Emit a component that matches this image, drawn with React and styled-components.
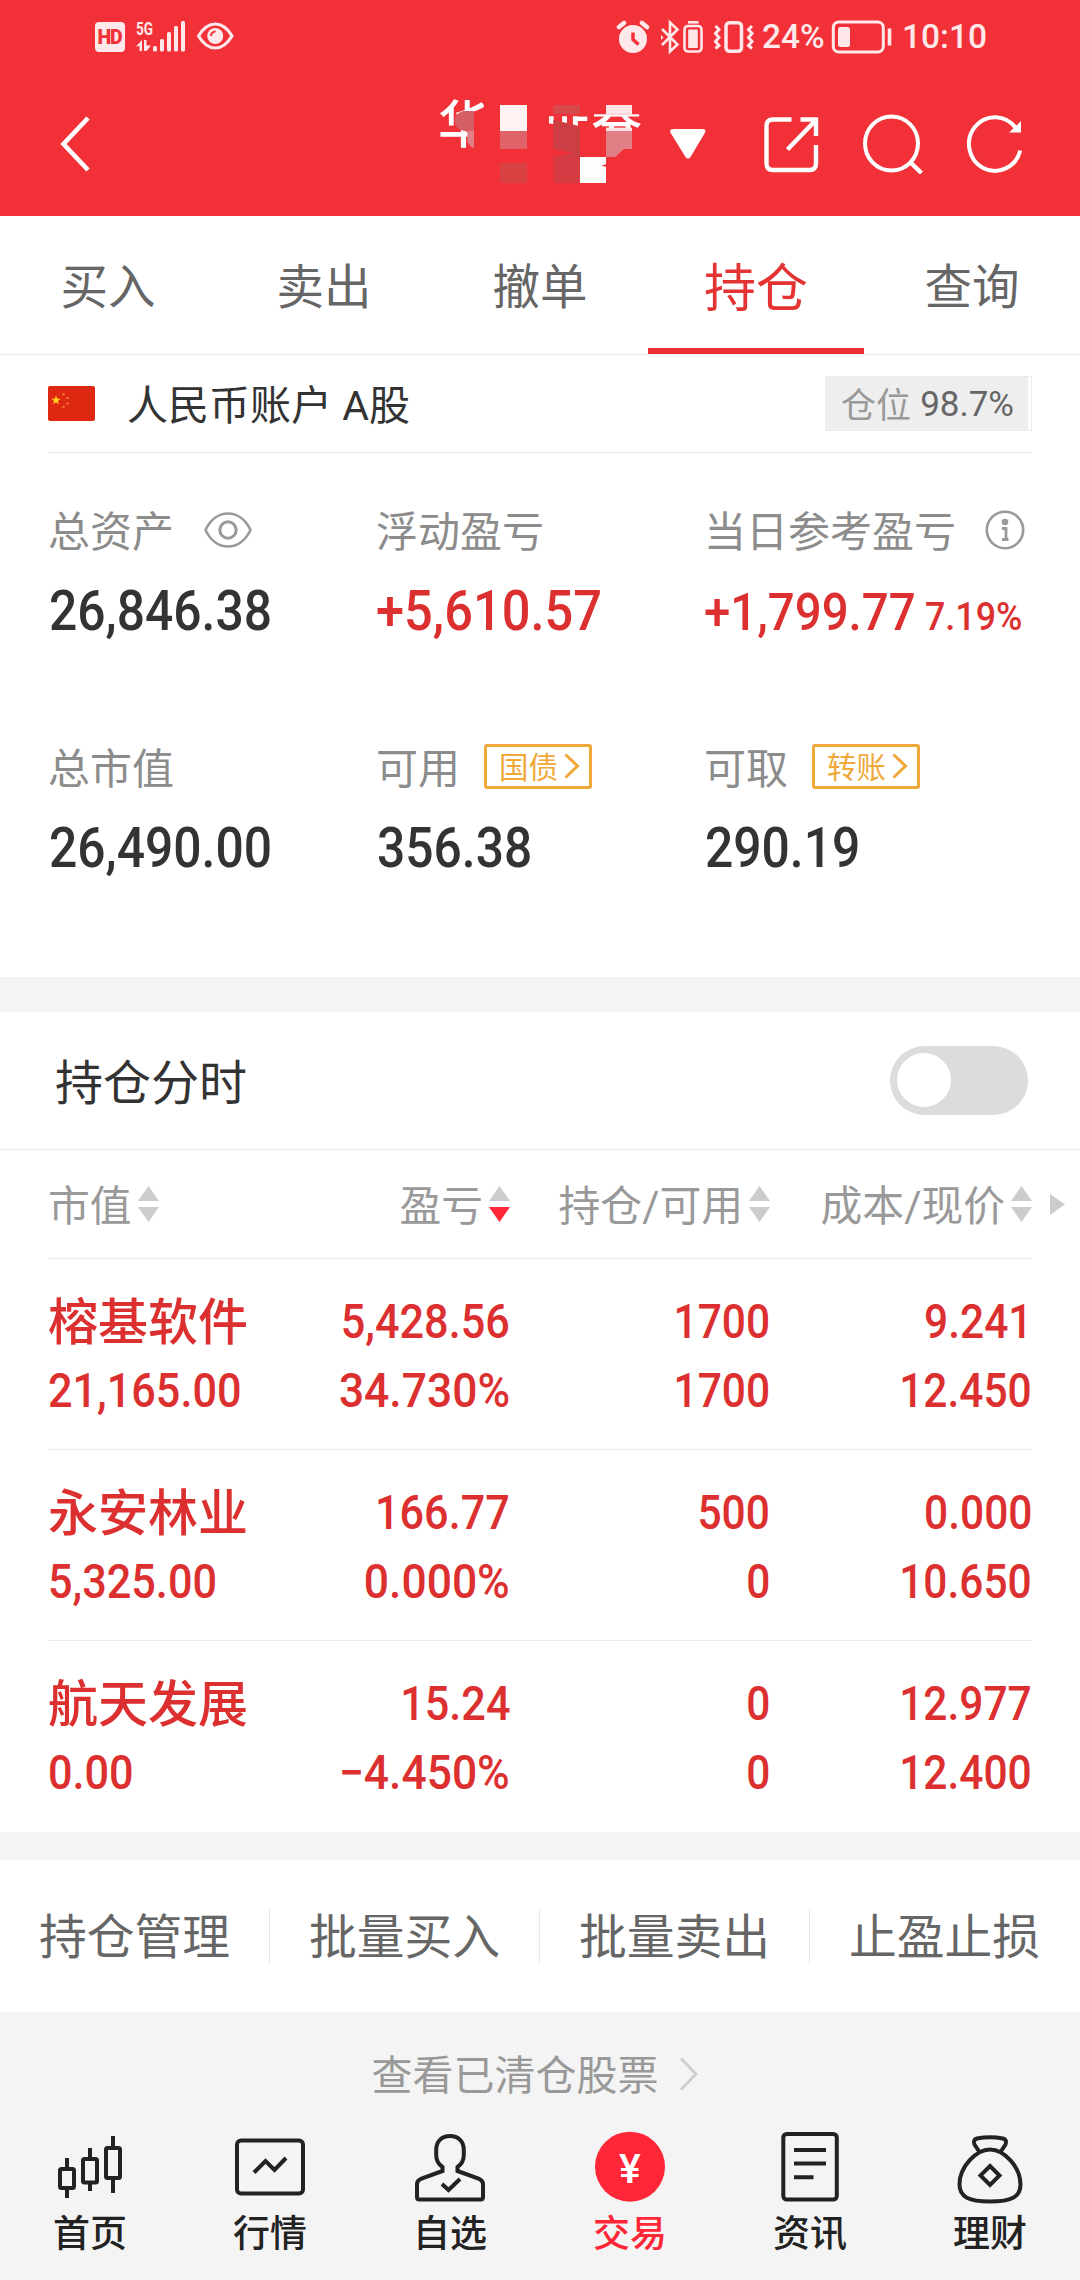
import React from 'react';
import styled, { createGlobalStyle } from 'styled-components';

const variables = {
  colorHeader: '#f23037',
  colorStatus: '#ffe8e9',
  colorRed: '#dc3030',
  colorActive: '#ff2637',
  colorGold: '#f0a838',
  colorText: '#333333',
  colorNeutral: '#666666',
  colorLabel: '#8c8c8c',
  colorLight: '#999999',
  colorLine: '#ececec',
  colorBand: '#f4f4f4',
};

const GlobalStyle = createGlobalStyle`
  * {
    box-sizing: border-box;
  }
  body {
    margin: 0;
    background: ${variables.colorBand};
    font-family: Roboto, 'Noto Sans CJK SC', sans-serif;
  }
  svg {
    display: block;
    flex: none;
  }
`;

const Page = styled.div`
  display: flex;
  flex-direction: column;
  width: 1080px;
  height: 2280px;
  overflow: hidden;
  background: #fff;
`;

const Header = styled.header`
  height: 216px;
  background: ${variables.colorHeader};
`;

const StatusBar = styled.div`
  display: flex;
  align-items: center;
  justify-content: space-between;
  height: 72px;
  padding: 2px 96px 0 95px;
  color: ${variables.colorStatus};
`;

const StatusGroup = styled.div`
  display: flex;
  align-items: center;
`;

const StatusText = styled.span`
  width: ${p => p.$width}px;
  margin-left: ${p => p.$gap}px;
  font-size: 33.5px;
  font-weight: 500;
  line-height: 40px;
  white-space: nowrap;
`;

const TitleBar = styled.div`
  display: flex;
  align-items: center;
  height: 144px;
  padding: 0 56px 0 60px;
`;

const Title = styled.div`
  position: relative;
  display: flex;
  width: 204px;
  height: 90px;
  margin: 0 28px 0 348px;
  color: #fff;
`;

const TitleChar = styled.span`
  width: 51px;
  height: 51px;
  font-size: 51px;
  font-weight: 500;
  line-height: ${p => p.$line}px;
  clip-path: ${p => p.$clip};
`;

const Mosaic = styled.svg`
  position: absolute;
  top: 0;
  left: 0;
`;

const HeaderIcons = styled.div`
  display: flex;
  align-items: center;
  gap: 44px;
  margin-left: auto;
`;

const Tabs = styled.nav`
  display: grid;
  grid-template-columns: repeat(5, 1fr);
  height: 139px;
  border-bottom: 1px solid ${variables.colorLine};
`;

const Tab = styled.div`
  display: flex;
  align-items: center;
  justify-content: center;
  padding: ${p => (p.$active ? '5px 0 0' : '0 0 3px')};
  border-bottom: ${p => (p.$active ? '6px solid #ed3033' : '0')};
  color: ${p => (p.$active ? '#e33333' : variables.colorNeutral)};
  font-size: ${p => (p.$active ? 52 : 47.5)}px;
`;

const Account = styled.div`
  display: flex;
  align-items: center;
  height: 98px;
  margin: 0 48px;
  border-bottom: 1px solid ${variables.colorLine};
`;

const AccountName = styled.div`
  margin-left: 32px;
  padding-bottom: 3px;
  color: ${variables.colorText};
  font-size: 41px;
`;

const Ratio = styled.div`
  height: 55px;
  margin-left: auto;
  padding-right: 3px;
  border: 1px solid ${variables.colorLine};
`;

const RatioInner = styled.div`
  display: flex;
  align-items: center;
  gap: 9px;
  height: 53px;
  padding: 1px 14px 0 15px;
  background: #eee;
  color: ${variables.colorNeutral};
  font-size: 35px;
`;

const RatioLabel = styled.span`
  padding-bottom: 3px;
  color: ${variables.colorLight};
`;

const Stats = styled.section`
  display: grid;
  grid-template-columns: repeat(3, 328px);
  grid-auto-rows: 148px;
  row-gap: 89px;
  height: 524px;
  padding: 46px 48px 0;
`;

const StatLabel = styled.div`
  display: flex;
  align-items: center;
  height: 60px;
  color: ${variables.colorLabel};
  font-size: 42px;
  white-space: nowrap;
`;

const StatText = styled.span`
  padding-bottom: 2px;
`;

const StatIcon = styled.span`
  margin-left: ${p => p.$gap}px;
  padding-top: 2px;
`;

const StatValue = styled.div`
  display: flex;
  align-items: baseline;
  margin-top: ${p => (p.$note ? 15 : 13)}px;
  padding-left: ${p => (p.$up ? 0 : 1)}px;
  color: ${p => (p.$up ? variables.colorRed : variables.colorText)};
  line-height: 78px;
  white-space: nowrap;
`;

/* figures are set in a slightly narrowed face */
const Figure = styled.span`
  display: inline-block;
  width: ${p => (p.$width ? `${p.$width}px` : 'auto')};
  font-size: ${p => p.$size}px;
  font-weight: 500;
  transform: scaleX(${p => p.$scale});
  transform-origin: ${p => (p.$right ? 'right' : 'left')} center;
`;

const Tag = styled.span`
  display: flex;
  align-items: center;
  gap: 6px;
  width: 108px;
  height: 45px;
  margin-left: 24px;
  padding-left: 12px;
  border: 3px solid ${variables.colorGold};
  border-radius: 3px;
  color: ${variables.colorGold};
  font-size: 29.5px;
`;

const TagText = styled.span`
  padding-bottom: 2px;
`;

const Band = styled.div`
  flex: none;
  height: ${p => p.$height}px;
  background: ${variables.colorBand};
`;

const Intraday = styled.div`
  display: flex;
  align-items: center;
  justify-content: space-between;
  height: 138px;
  padding: 0 52px 0 55px;
  border-bottom: 1px solid ${variables.colorLine};
`;

const IntradayTitle = styled.div`
  padding-bottom: 4px;
  color: ${variables.colorText};
  font-size: 48px;
`;

const Switch = styled.div`
  width: 138px;
  height: 69px;
  padding: 7px;
  border-radius: 35px;
  background: #dcdcdc;
`;

const Knob = styled.div`
  width: 54px;
  height: 54px;
  border-radius: 50%;
  background: #fff;
`;

const columns = '222px 240px 260px 262px';

const TableHead = styled.div`
  display: grid;
  grid-template-columns: ${columns} 48px;
  align-items: center;
  height: 108px;
  padding: 0 0 0 48px;
`;

const HeadCell = styled.div`
  display: flex;
  align-items: center;
  justify-content: ${p => (p.$left ? 'flex-start' : 'flex-end')};
  gap: 6px;
  color: ${variables.colorLight};
  font-size: 41.8px;
  white-space: nowrap;
`;

const HeadText = styled.span`
  padding-bottom: 3px;
`;

const More = styled.div`
  padding-left: 18px;
`;

const Holding = styled.div`
  display: grid;
  grid-template-columns: ${columns};
  grid-auto-rows: 69px;
  height: ${p => (p.$last ? 192 : 191)}px;
  margin: 0 48px;
  padding-top: 28px;
  border-top: 1px solid ${variables.colorLine};
  color: ${variables.colorRed};
  line-height: 69px;
`;

const StockName = styled.div`
  padding: 2px 0 0 0;
  font-size: 50px;
  font-weight: 500;
  white-space: nowrap;
`;

const HoldingCell = styled.div`
  text-align: ${p => (p.$left ? 'left' : 'right')};
  white-space: nowrap;
`;

const Actions = styled.div`
  display: grid;
  grid-template-columns: repeat(4, 1fr);
  align-items: center;
  height: 152px;
`;

const Action = styled.div`
  height: 55px;
  border-right: 1px solid ${p => (p.$last ? 'transparent' : '#e8e8e8')};
  color: ${variables.colorNeutral};
  font-size: 47.8px;
  line-height: 59px;
  text-align: center;
`;

const Footer = styled.footer`
  height: 268px;
  background: ${variables.colorBand};
`;

const Cleared = styled.div`
  display: flex;
  align-items: center;
  justify-content: center;
  gap: 20px;
  height: 117px;
  padding: 7px 11px 0 0;
`;

const ClearedText = styled.span`
  padding-bottom: 5px;
  color: ${variables.colorLight};
  font-size: 41px;
`;

const BottomNav = styled.nav`
  display: grid;
  grid-template-columns: repeat(6, 1fr);
`;

const NavItem = styled.div`
  display: flex;
  flex-direction: column;
  align-items: center;
  color: ${p => (p.$active ? variables.colorActive : '#222')};
  font-size: 37px;
  font-weight: 500;
  line-height: 60px;
`;

const SortIcon = ({ desc }) => (
  <svg width="21" height="36" viewBox="0 0 21 36">
    <path d="M10.5 0L21 15H0z" fill="#ccc" />
    <path d="M10.5 36L21 21H0z" fill={desc ? variables.colorActive : '#ccc'} />
  </svg>
);

const TagArrow = () => (
  <svg width="16" height="26" viewBox="0 0 16 26" fill="none" stroke="currentColor" strokeWidth="3">
    <path d="M1.5 1.5L13.5 13L1.5 24.5" />
  </svg>
);

const SignalIcons = () => (
  <svg width="140" height="36" viewBox="95 19 140 36" fill={variables.colorStatus}>
    <rect x="95" y="22" width="30" height="30" rx="4" />
    <text x="97.5" y="44" fontSize="19.5" fontWeight="900" fill={variables.colorHeader} textLength="25">HD</text>
    <text x="136" y="34.5" fontSize="18" fontWeight="700" textLength="17" lengthAdjust="spacingAndGlyphs">5G</text>
    <path d="M136 46.5L142 40v11h-2.500v-5zM144 40h2.500v5.500H151L146.500 51H144z" />
    <rect x="153" y="46" width="4" height="5.500" rx="1.500" />
    <rect x="160" y="39" width="4" height="12.500" rx="1.500" />
    <rect x="167" y="32" width="4" height="19.500" rx="1.500" />
    <rect x="174" y="26" width="4" height="25.500" rx="1.500" />
    <rect x="181" y="21" width="4" height="30.500" rx="1.500" />
    <path
      d="M198.500 36C208 20 222.500 20 232 36C222.500 52 208 52 198.500 36z"
      fill="none"
      stroke={variables.colorStatus}
      strokeWidth="3.200"
    />
    <circle cx="215.200" cy="36" r="8" />
    <path d="M211 36a4.500 4.500 0 0 1 4.500-4.500" fill="none" stroke={variables.colorHeader} strokeWidth="2" />
  </svg>
);

const DeviceIcons = () => (
  <svg width="138" height="36" viewBox="615 18 138 36" fill="none" stroke={variables.colorStatus}>
    <circle cx="632" cy="38" r="14" fill={variables.colorStatus} stroke="none" />
    <path d="M618 26l5-4M646 26l-5-4" strokeWidth="4.500" strokeLinecap="round" />
    <path d="M632 31.500v7l5.500 5" stroke={variables.colorHeader} strokeWidth="3.500" />
    <path d="M661 28L676.500 43.500L669 50.500V21.500L676.500 28.500L661 44" strokeWidth="2.600" />
    <path d="M660 34v5l2.500-2.500z" fill={variables.colorStatus} stroke="none" />
    <rect x="683.500" y="25" width="17" height="25.500" rx="3.500" strokeWidth="2.600" />
    <rect x="687.200" y="28.500" width="9.600" height="18.500" fill={variables.colorStatus} stroke="none" />
    <path d="M687 21.300h10.500" strokeWidth="2.600" />
    <rect x="725" y="21.700" width="15.500" height="28.500" rx="3.500" strokeWidth="3.500" />
    <path d="M714.500 25l3.500 3.500-3.500 4 3.500 4-3.500 4 3.500 4-3.500 3" strokeWidth="3" />
    <path d="M751 25l-3.500 3.500 3.500 4-3.500 4 3.500 4-3.500 4 3.500 3" strokeWidth="3" />
  </svg>
);

const BatteryIcon = () => (
  <svg width="61" height="34" viewBox="830 19.500 61 34" fill="none" stroke={variables.colorStatus}>
    <rect x="832.300" y="21.500" width="50" height="30" rx="5.500" strokeWidth="3" />
    <rect x="837" y="26.500" width="12" height="20" rx="2.500" fill={variables.colorStatus} stroke="none" />
    <path d="M888.500 28v17" strokeWidth="3.600" />
  </svg>
);

const BackIcon = () => (
  <svg width="30" height="56" viewBox="0 0 30 56" fill="none" stroke="#fff" strokeWidth="4.600">
    <path d="M28 2L3.500 28L28 54" />
  </svg>
);

const CaretIcon = () => (
  <svg width="36" height="30" viewBox="0 0 36 30" fill="#fff">
    <path d="M3.500 0h29q4.500 0 2 4.500L20.500 28q-2.500 3-5 0L1 4.500Q-1.500 0 3.500 0z" />
  </svg>
);

const ShareIcon = () => (
  <svg width="55" height="57" viewBox="0 -1 55 57" fill="none" stroke="#fff" strokeWidth="4.400">
    <path d="M27.500 2.500H9Q2.500 2.500 2.500 9V46.500Q2.500 53 9 53H45.500Q52 53 52 46.500V28" />
    <path d="M36.500 2.500H52V19M51 4L23.500 32.500" />
  </svg>
);

const SearchIcon = () => (
  <svg width="60" height="60" viewBox="0 0 60 60" fill="none" stroke="#fff" strokeWidth="4">
    <ellipse cx="28.500" cy="29.500" rx="26.500" ry="27" />
    <path d="M47.500 48.500L58.500 59" strokeWidth="4.400" />
  </svg>
);

const RefreshIcon = () => (
  <svg width="57" height="60" viewBox="0 0 57 60" fill="none" stroke="#fff" strokeWidth="4">
    <path d="M53.200 36.500A26 26.800 0 1 1 48.800 14" />
    <path d="M54 7V18.500H42L48 13z" fill="#fff" stroke="none" />
  </svg>
);

const FlagIcon = () => (
  <svg width="47" height="35" viewBox="0 0 47 35">
    <rect width="47" height="35" rx="2" fill="#df2811" />
    <path
      d="M8 9.500l1.200 3.200 3.400.1-2.700 2.100 1 3.300L8 16.300l-2.900 1.900 1-3.300-2.700-2.100 3.400-.1z"
      fill="#ffd21e"
    />
    <g fill="#f0722a">
      <circle cx="15.500" cy="8.500" r="1.300" />
      <circle cx="19.500" cy="12" r="1.300" />
      <circle cx="19.500" cy="17.500" r="1.300" />
      <circle cx="15.500" cy="21" r="1.300" />
    </g>
  </svg>
);

const EyeIcon = () => (
  <svg width="48" height="36" viewBox="0 0 48 36" fill="none" stroke={variables.colorLight} strokeWidth="2.600">
    <path d="M1.500 18C12-4 36-4 46.500 18C36 40 12 40 1.500 18z" />
    <circle cx="24" cy="18" r="8.200" strokeWidth="3" />
  </svg>
);

const InfoIcon = () => (
  <svg width="40" height="40" viewBox="0 0 40 40" fill="none" stroke={variables.colorLight}>
    <circle cx="20" cy="20" r="18.200" strokeWidth="2.600" />
    <circle cx="20" cy="12" r="3.300" fill={variables.colorLight} stroke="none" />
    <path d="M17 18.500h4V29M17 29.500h6.500" strokeWidth="2.800" />
  </svg>
);

const NavIcon = ({ children }) => (
  <svg width="76" height="76" viewBox="0 0 76 76" fill="none" stroke="currentColor" strokeWidth="4">
    {children}
  </svg>
);

const tabs = ['买入', '卖出', '撤单', '持仓', '查询'];

const heads = ['市值', '盈亏', '持仓/可用', '成本/现价'];

const holdings = [
  ['榕基软件', '5,428.56', '1700', '9.241', '21,165.00', '34.730%', '1700', '12.450'],
  ['永安林业', '166.77', '500', '0.000', '5,325.00', '0.000%', '0', '10.650'],
  ['航天发展', '15.24', '0', '12.977', '0.00', '−4.450%', '0', '12.400'],
];

const actions = ['持仓管理', '批量买入', '批量卖出', '止盈止损'];

const navItems = [
  {
    label: '首页',
    icon: (
      <>
        <rect x="8" y="40" width="14" height="19" rx="1.500" />
        <rect x="31" y="30" width="14" height="23.500" rx="1.500" />
        <rect x="54" y="19" width="14" height="30" rx="1.500" />
        <path d="M15 29v11M15 59v10M38 19v11M38 53v9M61 7v12M61 49v15" />
      </>
    ),
  },
  {
    label: '行情',
    icon: (
      <>
        <rect x="5" y="11.500" width="66" height="53" rx="4" />
        <path d="M22 43.500L33.500 32L42.500 41L54 29" />
      </>
    ),
  },
  {
    label: '自选',
    icon: (
      <>
        <path d="M30.500 42V38C26 35 24.200 31 24.200 26V21C24.200 12 30 7 38 7S51.800 12 51.800 21V26C51.800 31 50 35 45.500 38V42L66.500 49.500Q71 51.500 71 55V68Q71 70.500 68.500 70.500H7.500Q5 70.500 5 68V55Q5 51.500 9.500 49.500z" />
        <path d="M30 55L36.500 61L48 50" />
      </>
    ),
  },
  {
    label: '交易',
    active: true,
    icon: (
      <>
        <circle cx="38" cy="37.700" r="35" fill="currentColor" stroke="none" />
        <text x="38" y="53.500" fontSize="41" fontWeight="500" fill="#fff" stroke="none" textAnchor="middle">¥</text>
      </>
    ),
  },
  {
    label: '资讯',
    icon: (
      <>
        <rect x="11.300" y="5" width="53.500" height="65.500" rx="3.500" />
        <path d="M22 21h32M22 34.600h32M22 48.300h19.500" />
      </>
    ),
  },
  {
    label: '理财',
    icon: (
      <>
        <path d="M27.500 23L22.500 15.500Q20.500 11 25 9.500Q38 7 51 9.500Q55.500 11 53.500 15.500L48.500 23" />
        <path d="M38 20.500C24 20.500 7.500 38 7.500 55.500C7.500 68 17 72.500 38 72.500S68.500 68 68.500 55.500C68.500 38 52 20.500 38 20.500z" />
        <path d="M38 37L47.500 46.500L38 56L28.500 46.500z" />
      </>
    ),
  },
];

const Stat = ({ label, extra, value, up, note }) => (
  <div>
    <StatLabel>
      <StatText>{label}</StatText>
      {extra}
    </StatLabel>
    <StatValue $up={up} $note={note}>
      <Figure $size={note ? 51.5 : 55} $scale={up ? 0.92 : 0.905} $width={note && 221}>{value}</Figure>
      {note && <Figure $size={38.5} $scale={0.93}>{note}</Figure>}
    </StatValue>
  </div>
);

// quantity and price columns run narrower than the amounts, percentages wider
const figureScale = (cell, i) => {
  if (cell.endsWith('%')) return 0.925;
  return i % 4 === 1 || i % 4 === 2 ? 0.885 : 0.9;
};

const App = () => (
  <>
    <GlobalStyle />
    <Page>
      <Header>
        <StatusBar>
          <StatusGroup>
            <SignalIcons />
          </StatusGroup>
          <StatusGroup>
            <DeviceIcons />
            <StatusText $width={69} $gap={8}>24%</StatusText>
            <BatteryIcon />
            <StatusText $width={82} $gap={10}>10:10</StatusText>
          </StatusGroup>
        </StatusBar>
        <TitleBar>
          <BackIcon />
          <Title>
            <TitleChar $line={53} $clip="polygon(0 0, 90% 0, 90% 22%, 56% 40%, 48% 60%, 66% 68%, 66% 100%, 0 100%)">华</TitleChar>
            <TitleChar $line={51} $clip="inset(100% 0 0 0)" />
            <TitleChar $line={46} $clip="polygon(0 34%, 100% 34%, 100% 57%, 0 46%)">证</TitleChar>
            <TitleChar $line={44} $clip="inset(30% 0 41% 0)">券</TitleChar>
            <Mosaic width="204" height="90" viewBox="24 12 612 270">
              <path d="M132 48H100Q74 54 74 78Q76 104 104 108H132z" fill="#d65f66" />
              <path d="M132 108H112V138Q118 156 132 159z" fill="#e07f84" />
              <path d="M210 30h81v78h-81z" fill="#fff3f4" />
              <path d="M210 108h81v54h-81z" fill="#df6369" />
              <path d="M210 204h81v60h-81z" fill="#d84243" />
              <path d="M370 30h80v27h-80z" fill="#d64a4e" />
              <path d="M370 74L450 94V186L370 186L430 174L370 162z" fill="#cd3e44" />
              <path d="M370 186h80v78h-80z" fill="#d63b43" />
              <path d="M528 30h78v27h-78z" fill="#ffe2e3" />
              <path d="M528 98h78v10h-78z" fill="#ffe0e1" />
              <path d="M528 108h78v54h-24L556 186H528z" fill="#e07f84" />
              <path d="M450 186h78v22l-14 4 14 3v49h-78z" fill="#fffcfd" />
            </Mosaic>
          </Title>
          <CaretIcon />
          <HeaderIcons>
            <ShareIcon />
            <SearchIcon />
            <RefreshIcon />
          </HeaderIcons>
        </TitleBar>
      </Header>

      <Tabs>
        {tabs.map(tab => (
          <Tab key={tab} $active={tab === '持仓'}>{tab}</Tab>
        ))}
      </Tabs>

      <Account>
        <FlagIcon />
        <AccountName>人民币账户 A股</AccountName>
        <Ratio>
          <RatioInner>
            <RatioLabel>仓位</RatioLabel>
            98.7%
          </RatioInner>
        </Ratio>
      </Account>

      <Stats>
        <Stat label="总资产" value="26,846.38" extra={<StatIcon $gap={30}><EyeIcon /></StatIcon>} />
        <Stat label="浮动盈亏" value="+5,610.57" up />
        <Stat
          label="当日参考盈亏"
          value="+1,799.77"
          note="7.19%"
          up
          extra={<StatIcon $gap={29}><InfoIcon /></StatIcon>}
        />
        <Stat label="总市值" value="26,490.00" />
        <Stat label="可用" value="356.38" extra={<Tag><TagText>国债</TagText><TagArrow /></Tag>} />
        <Stat label="可取" value="290.19" extra={<Tag><TagText>转账</TagText><TagArrow /></Tag>} />
      </Stats>

      <Band $height={35} />

      <Intraday>
        <IntradayTitle>持仓分时</IntradayTitle>
        <Switch>
          <Knob />
        </Switch>
      </Intraday>

      <TableHead>
        {heads.map((head, i) => (
          <HeadCell key={head} $left={i === 0}>
            <HeadText>{head}</HeadText>
            <SortIcon desc={i === 1} />
          </HeadCell>
        ))}
        <More>
          <svg width="15" height="21" viewBox="0 0 15 21">
            <path d="M0 0L15 10.500L0 21z" fill="#ccc" />
          </svg>
        </More>
      </TableHead>

      {holdings.map(([name, ...cells], row) => (
        <Holding key={name} $last={row === 2}>
          <StockName>{name}</StockName>
          {cells.map((cell, i) => (
            <HoldingCell key={i} $left={i === 3}>
              <Figure $size={48} $scale={figureScale(cell, i)} $right={i !== 3}>{cell}</Figure>
            </HoldingCell>
          ))}
        </Holding>
      ))}

      <Band $height={28} />

      <Actions>
        {actions.map((action, i) => (
          <Action key={action} $last={i === 3}>{action}</Action>
        ))}
      </Actions>

      <Footer>
        <Cleared>
          <ClearedText>查看已清仓股票</ClearedText>
          <svg width="19" height="34" viewBox="0 0 19 34" fill="none" stroke="#ccc" strokeWidth="2.600">
            <path d="M2 1.500L17 17L2 32.500" />
          </svg>
        </Cleared>
        <BottomNav>
          {navItems.map(({ label, icon, active }) => (
            <NavItem key={label} $active={active}>
              <NavIcon>{icon}</NavIcon>
              {label}
            </NavItem>
          ))}
        </BottomNav>
      </Footer>
    </Page>
  </>
);

export default App;
